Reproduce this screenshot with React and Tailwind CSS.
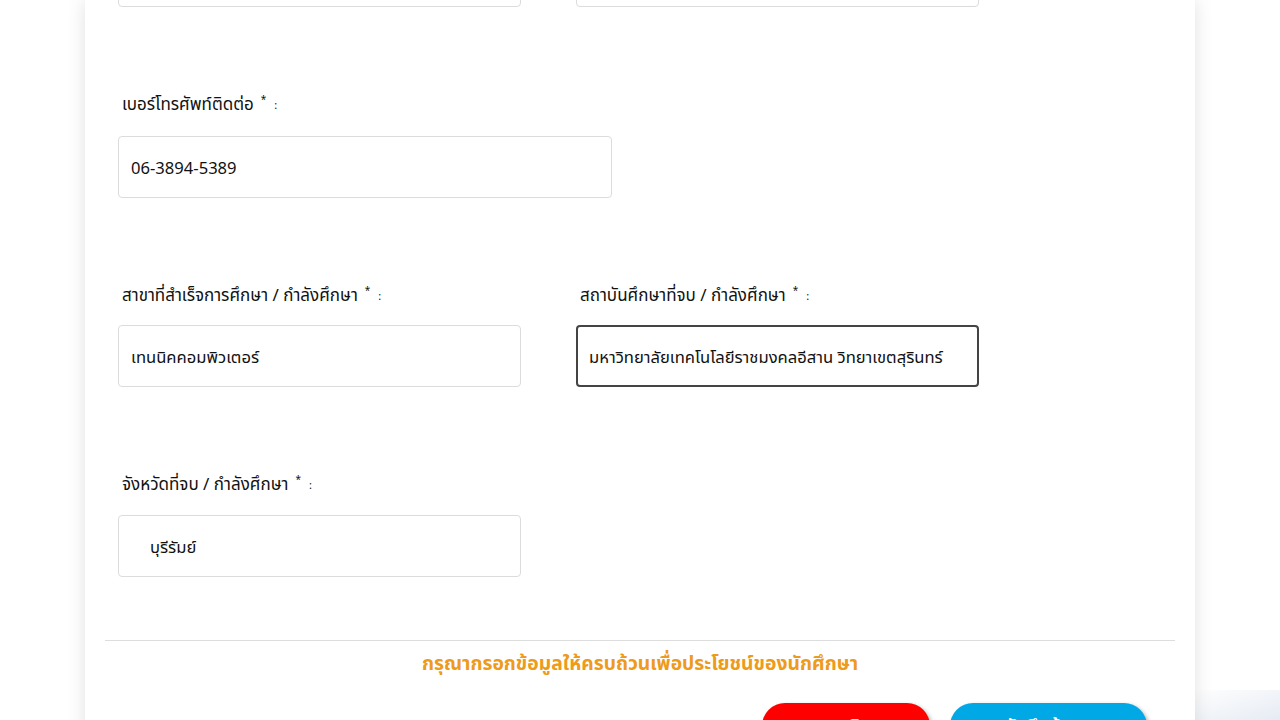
import React from "react";

const font = { fontFamily: '"Noto Sans Thai", "Noto Sans", "Liberation Sans", sans-serif' };

function Label({ children }) {
  return (
    <div className="h-[24px] pl-[4px] text-[17px] leading-[24px] text-[#111] flex items-center">
      <span>{children}</span>
      <span className="ml-[7px] text-[10px] relative -top-[5px]">*</span>
      <span className="ml-[8px] text-[11px] relative top-[1px]">:</span>
    </div>
  );
}

function Input({ value, width = "w-[403px]", focused = false, indent = false }) {
  return (
    <div
      className={`${width} h-[62px] rounded-[4px] flex items-center pt-[4px] text-[16.6px] text-[#111] bg-white ${
        focused ? "border-2 border-[#444] pl-[11px]" : "border border-[#dcdcdc] pl-[12px]"
      }`}
    >
      <span className={indent ? "pl-[19px]" : ""}>{value}</span>
    </div>
  );
}

export default function App() {
  return (
    <div style={font} className="relative w-[1280px] h-[720px] overflow-hidden bg-white">
      <div className="absolute right-0 bottom-0 w-[90px] h-[30px] bg-gradient-to-tl from-[#e6ebf3] to-white"></div>
      <div className="relative flow-root mx-auto w-[1110px] h-[760px] bg-white shadow-[0_0_18px_rgba(0,0,0,0.12)] pl-[33px] pr-[20px]">
        <div className="flex gap-[55px] -mt-[55px]">
          <div className="w-[403px] h-[62px] rounded-[4px] border border-[#dcdcdc]"></div>
          <div className="w-[403px] h-[62px] rounded-[4px] border border-[#dcdcdc]"></div>
        </div>

        <div className="mt-[86px]">
          <Label>เบอร์โทรศัพท์ติดต่อ</Label>
          <div className="mt-[19px]">
            <Input value="06-3894-5389" width="w-[494px]" />
          </div>
        </div>

        <div className="mt-[86px] flex gap-[55px]">
          <div>
            <Label>สาขาที่สำเร็จการศึกษา / กำลังศึกษา</Label>
            <div className="mt-[17px]">
              <Input value="เทนนิคคอมพิวเตอร์" />
            </div>
          </div>
          <div>
            <Label>สถาบันศึกษาที่จบ / กำลังศึกษา</Label>
            <div className="mt-[17px]">
              <Input value="มหาวิทยาลัยเทคโนโลยีราชมงคลอีสาน วิทยาเขตสุรินทร์" focused />
            </div>
          </div>
        </div>

        <div className="mt-[86px]">
          <Label>จังหวัดที่จบ / กำลังศึกษา</Label>
          <div className="mt-[18px]">
            <Input value="บุรีรัมย์" indent />
          </div>
        </div>

        <div className="-ml-[13px] mt-[63px] border-t border-[#dddddd] w-[1070px]"></div>
        <div className="w-[1070px] -ml-[13px] text-center mt-[11px] text-[19.3px] font-bold text-[#ee9a1a] leading-[26px]">
          กรุณากรอกข้อมูลให้ครบถ้วนเพื่อประโยชน์ของนักศึกษา
        </div>
        <div className="flex justify-end gap-[20px] mt-[25px] pr-[28px]">
          <button className="w-[168px] h-[46px] rounded-full bg-[#ff0000] text-white font-bold text-[18px] leading-[26px] pt-[2px] shadow-[2px_2px_4px_rgba(0,0,0,0.3)]">
            ยกเลิก
          </button>
          <button className="w-[197px] h-[46px] rounded-full bg-[#00a8e6] text-white font-bold text-[18px] leading-[26px] pt-[2px] shadow-[2px_2px_4px_rgba(0,0,0,0.3)]">
            บันทึกข้อมูล
          </button>
        </div>
      </div>
    </div>
  );
}
